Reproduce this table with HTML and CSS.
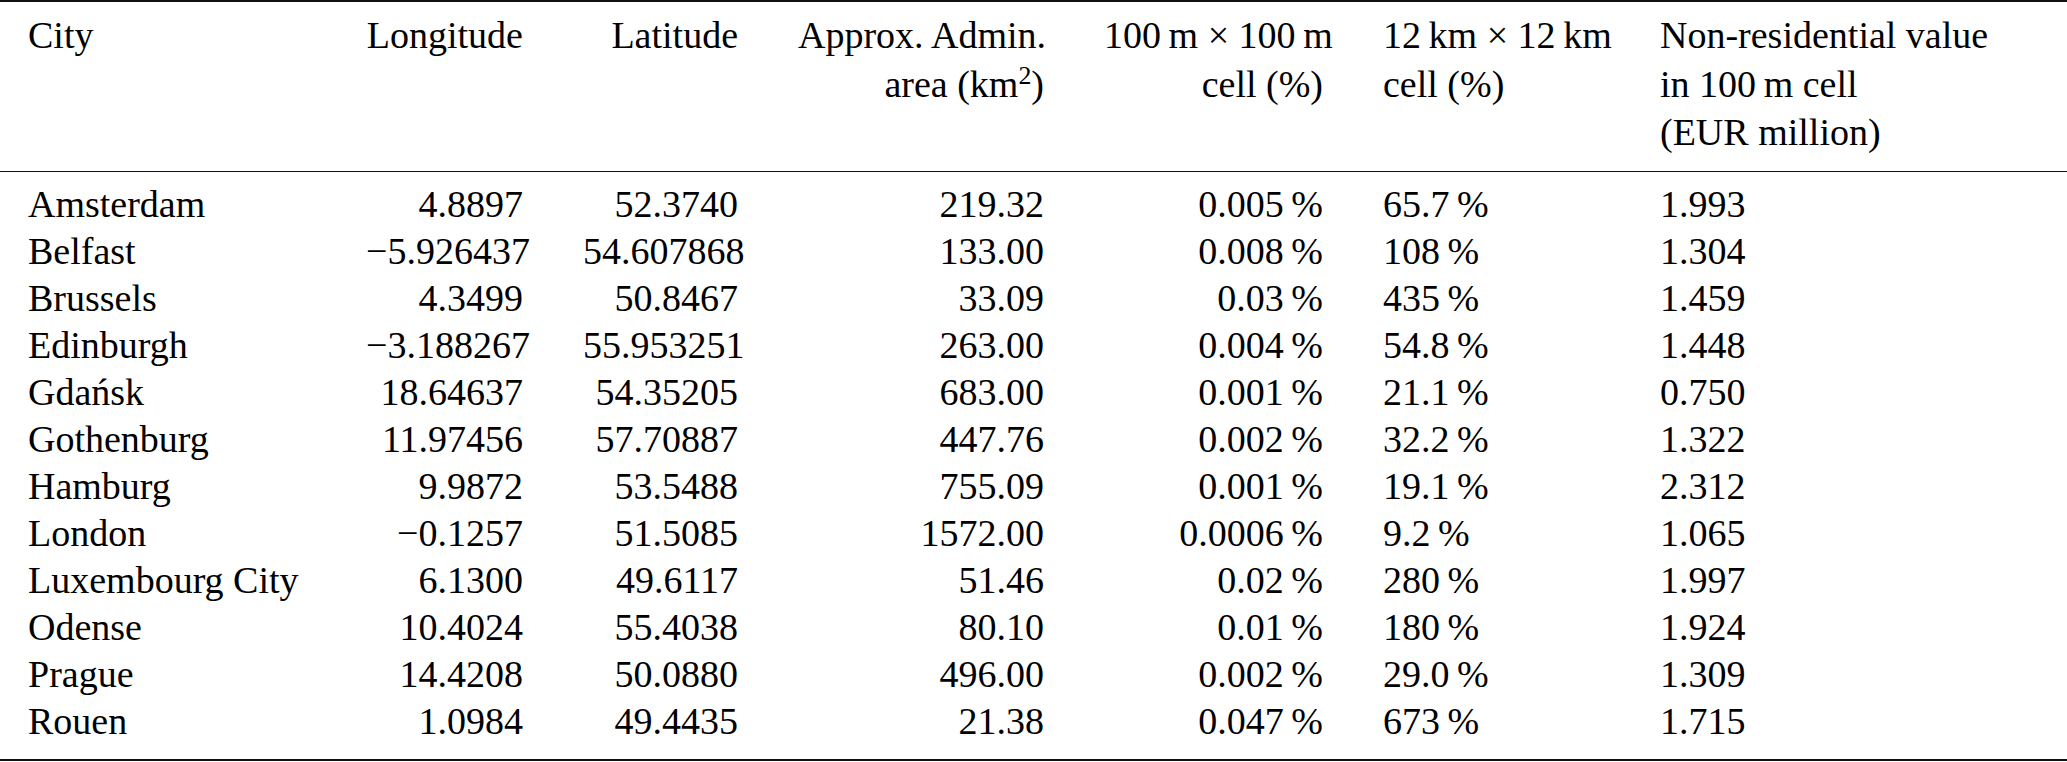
FILE: index.html
```html
<!DOCTYPE html>
<html lang="en">
<head>
<meta charset="utf-8">
<title>City table</title>
<link rel="stylesheet" href="styles.css">
</head>
<body>
<div class="table">
  <div class="thead">
    <div class="row head-row">
      <div class="cell left first">City</div>
      <div class="cell right">Longitude</div>
      <div class="cell right">Latitude</div>
      <div class="cell right">Approx. Admin.<br>area (km<sup>2</sup>)</div>
      <div class="cell right">100&thinsp;m × 100&thinsp;m<br>cell (%)</div>
      <div class="cell left">12&thinsp;km × 12&thinsp;km<br>cell (%)</div>
      <div class="cell left">Non-residential value<br>in 100&thinsp;m cell<br>(EUR million)</div>
    </div>
  </div>
  <div class="tbody">
    <div class="row"><div class="cell left first">Amsterdam</div><div class="cell right">4.8897</div><div class="cell right">52.3740</div><div class="cell right">219.32</div><div class="cell right">0.005&thinsp;%</div><div class="cell left">65.7&thinsp;%</div><div class="cell left">1.993</div></div>
    <div class="row"><div class="cell left first">Belfast</div><div class="cell right">−5.926437</div><div class="cell right">54.607868</div><div class="cell right">133.00</div><div class="cell right">0.008&thinsp;%</div><div class="cell left">108&thinsp;%</div><div class="cell left">1.304</div></div>
    <div class="row"><div class="cell left first">Brussels</div><div class="cell right">4.3499</div><div class="cell right">50.8467</div><div class="cell right">33.09</div><div class="cell right">0.03&thinsp;%</div><div class="cell left">435&thinsp;%</div><div class="cell left">1.459</div></div>
    <div class="row"><div class="cell left first">Edinburgh</div><div class="cell right">−3.188267</div><div class="cell right">55.953251</div><div class="cell right">263.00</div><div class="cell right">0.004&thinsp;%</div><div class="cell left">54.8&thinsp;%</div><div class="cell left">1.448</div></div>
    <div class="row"><div class="cell left first">Gdańsk</div><div class="cell right">18.64637</div><div class="cell right">54.35205</div><div class="cell right">683.00</div><div class="cell right">0.001&thinsp;%</div><div class="cell left">21.1&thinsp;%</div><div class="cell left">0.750</div></div>
    <div class="row"><div class="cell left first">Gothenburg</div><div class="cell right">11.97456</div><div class="cell right">57.70887</div><div class="cell right">447.76</div><div class="cell right">0.002&thinsp;%</div><div class="cell left">32.2&thinsp;%</div><div class="cell left">1.322</div></div>
    <div class="row"><div class="cell left first">Hamburg</div><div class="cell right">9.9872</div><div class="cell right">53.5488</div><div class="cell right">755.09</div><div class="cell right">0.001&thinsp;%</div><div class="cell left">19.1&thinsp;%</div><div class="cell left">2.312</div></div>
    <div class="row"><div class="cell left first">London</div><div class="cell right">−0.1257</div><div class="cell right">51.5085</div><div class="cell right">1572.00</div><div class="cell right">0.0006&thinsp;%</div><div class="cell left">9.2&thinsp;%</div><div class="cell left">1.065</div></div>
    <div class="row"><div class="cell left first">Luxembourg City</div><div class="cell right">6.1300</div><div class="cell right">49.6117</div><div class="cell right">51.46</div><div class="cell right">0.02&thinsp;%</div><div class="cell left">280&thinsp;%</div><div class="cell left">1.997</div></div>
    <div class="row"><div class="cell left first">Odense</div><div class="cell right">10.4024</div><div class="cell right">55.4038</div><div class="cell right">80.10</div><div class="cell right">0.01&thinsp;%</div><div class="cell left">180&thinsp;%</div><div class="cell left">1.924</div></div>
    <div class="row"><div class="cell left first">Prague</div><div class="cell right">14.4208</div><div class="cell right">50.0880</div><div class="cell right">496.00</div><div class="cell right">0.002&thinsp;%</div><div class="cell left">29.0&thinsp;%</div><div class="cell left">1.309</div></div>
    <div class="row"><div class="cell left first">Rouen</div><div class="cell right">1.0984</div><div class="cell right">49.4435</div><div class="cell right">21.38</div><div class="cell right">0.047&thinsp;%</div><div class="cell left">673&thinsp;%</div><div class="cell left">1.715</div></div>
  </div>
</div>
</body>
</html>
```

FILE: styles.css
```css
html, body {
  margin: 0;
  padding: 0;
  background: #ffffff;
}

body {
  font-family: "Liberation Serif", "Times New Roman", serif;
  font-size: 38px;
  color: #000000;
}

.table {
  width: 2067px;
}

.thead {
  border-top: 2px solid #111111;
  border-bottom: 1px solid #111111;
  padding: 9px 0 14px;
  line-height: 48.5px;
}

.tbody {
  border-bottom: 2px solid #111111;
  padding: 9px 0 14px;
  line-height: 47px;
}

.row {
  display: grid;
  grid-template-columns: 336px 217px 215px 306px 279px 277px 437px;
}

.cell {
  padding: 0 30px;
  white-space: nowrap;
}

.cell.first {
  padding-left: 28px;
}

.left {
  text-align: left;
}

.right {
  text-align: right;
}

sup {
  font-size: 0.68em;
  line-height: 0;
  vertical-align: 0.5em;
}
```
